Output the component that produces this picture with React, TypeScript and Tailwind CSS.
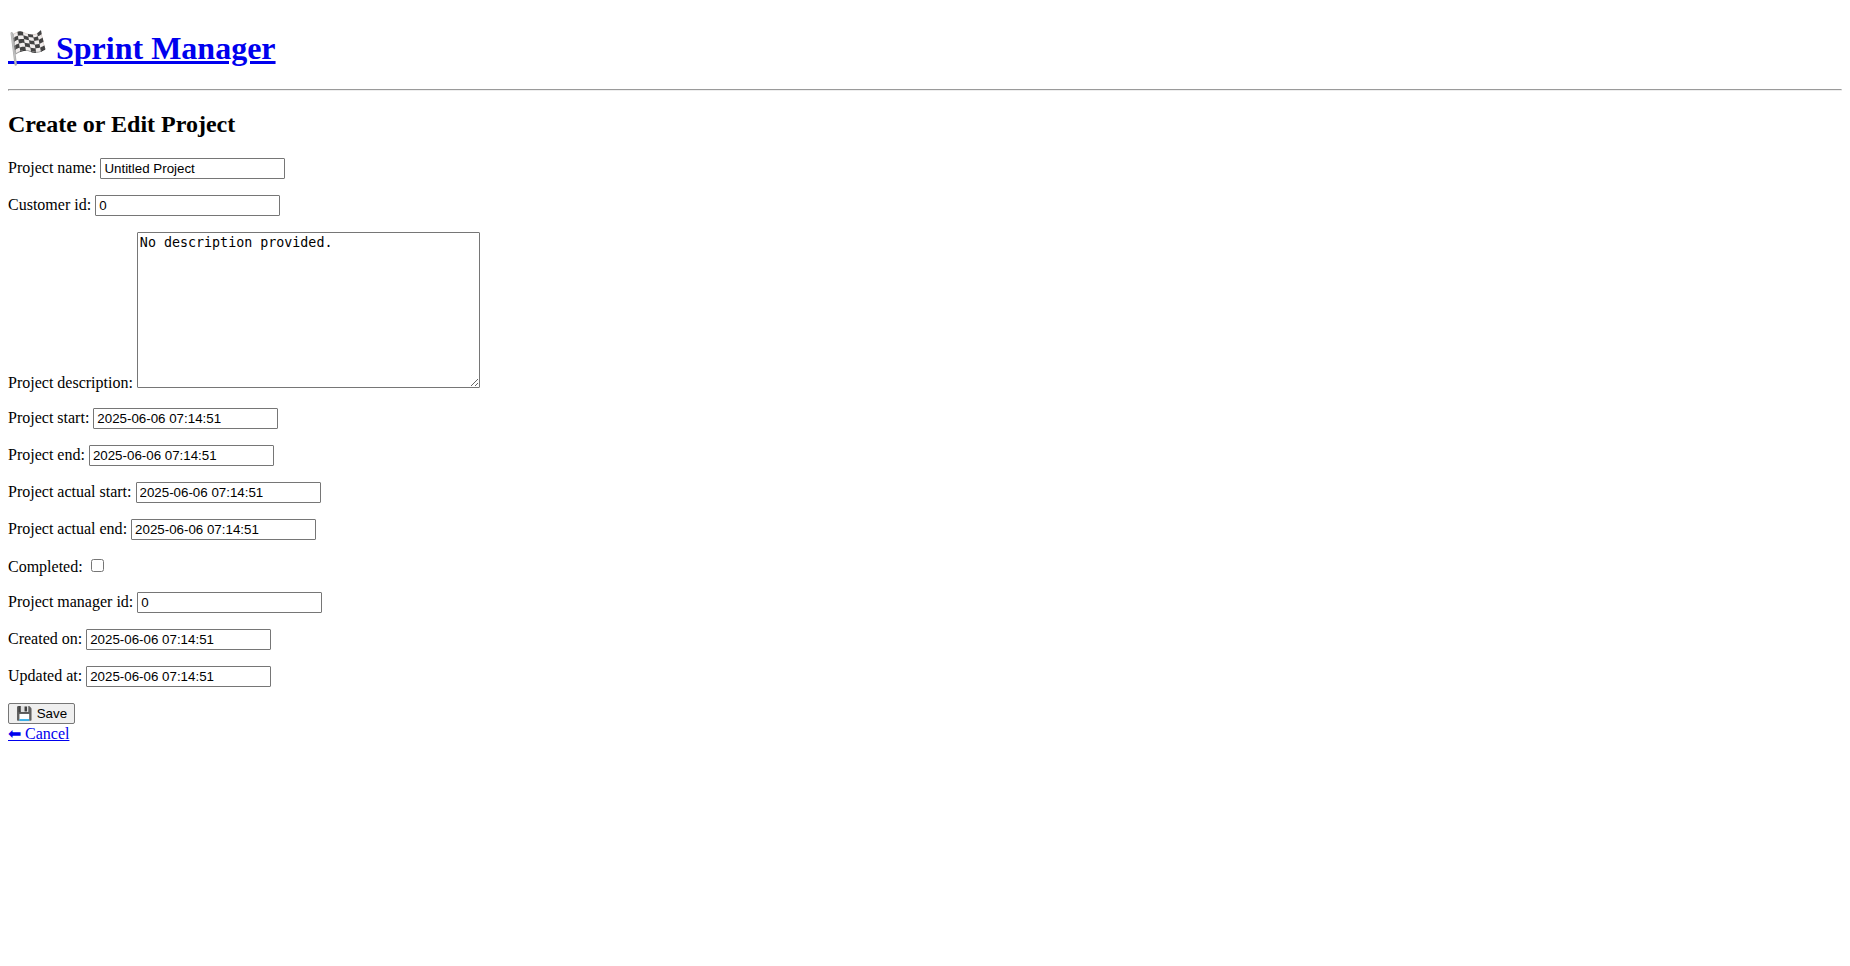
import { useState } from "react";

const inputClass =
  "w-[185px] rounded-[1px] border border-[#767676] bg-white px-[3px] py-[2px] font-['Liberation_Sans',Arial,sans-serif] [font-size:revert] leading-[normal] text-black";

const timestamp = "2025-06-06 07:14:51";

function TextField({ id, label, initial }: { id: string; label: string; initial: string }) {
  const [value, setValue] = useState(initial);

  return (
    <p className="my-4">
      <label htmlFor={id}>{label}:</label>{" "}
      <input
        id={id}
        name={id}
        type="text"
        value={value}
        onChange={(e) => setValue(e.target.value)}
        className={inputClass}
      />
    </p>
  );
}

function Header() {
  return (
    <header>
      <h1 className="mt-[21px] mb-[22px] text-[32px] leading-[normal] font-bold">
        <a href="/" className="text-[#0000ee] underline">
          🏁 Sprint Manager
        </a>
      </h1>
      <hr className="h-[2px] border border-t-[#9a9a9a] border-r-[#eeeeee] border-b-[#eeeeee] border-l-[#9a9a9a]" />
    </header>
  );
}

function ProjectForm() {
  const [description, setDescription] = useState("No description provided.");
  const [completed, setCompleted] = useState(false);

  return (
    <form onSubmit={(e) => e.preventDefault()}>
      <TextField id="name" label="Project name" initial="Untitled Project" />
      <TextField id="customer_id" label="Customer id" initial="0" />
      <p className="my-4">
        <label htmlFor="description">Project description:</label>{" "}
        <textarea
          id="description"
          name="description"
          rows={10}
          cols={40}
          value={description}
          onChange={(e) => setDescription(e.target.value)}
          className="inline-block resize rounded-[1px] border border-[#767676] bg-white p-[2px] align-baseline font-['DejaVu_Sans_Mono',monospace] [font-size:revert] leading-[normal] text-black"
        />
      </p>
      <TextField id="start" label="Project start" initial={timestamp} />
      <TextField id="end" label="Project end" initial={timestamp} />
      <TextField id="actual_start" label="Project actual start" initial={timestamp} />
      <TextField id="actual_end" label="Project actual end" initial={timestamp} />
      <p className="my-4">
        <label htmlFor="completed">Completed:</label>{" "}
        <input
          id="completed"
          name="completed"
          type="checkbox"
          checked={completed}
          onChange={(e) => setCompleted(e.target.checked)}
          className="mt-[3px] mr-[3px] mb-[3px] ml-1"
        />
      </p>
      <TextField id="manager_id" label="Project manager id" initial="0" />
      <TextField id="created_on" label="Created on" initial={timestamp} />
      <TextField id="updated_at" label="Updated at" initial={timestamp} />
      <button
        type="submit"
        className="rounded-[2px] border border-[#767676] bg-[#efefef] px-[7px] py-[2px] font-['Liberation_Sans',Arial,sans-serif] [font-size:revert] leading-[normal] text-black"
      >
        💾 Save
      </button>
    </form>
  );
}

export default function App() {
  return (
    <div className="flow-root p-2 font-['Liberation_Serif','Times_New_Roman',serif] text-base leading-[normal] text-black">
      <Header />
      <main>
        <h2 className="my-5 text-2xl leading-[normal] font-bold">Create or Edit Project</h2>
        <ProjectForm />
        <a href="/projects" className="text-[#0000ee] underline">
          ⬅ Cancel
        </a>
      </main>
    </div>
  );
}
